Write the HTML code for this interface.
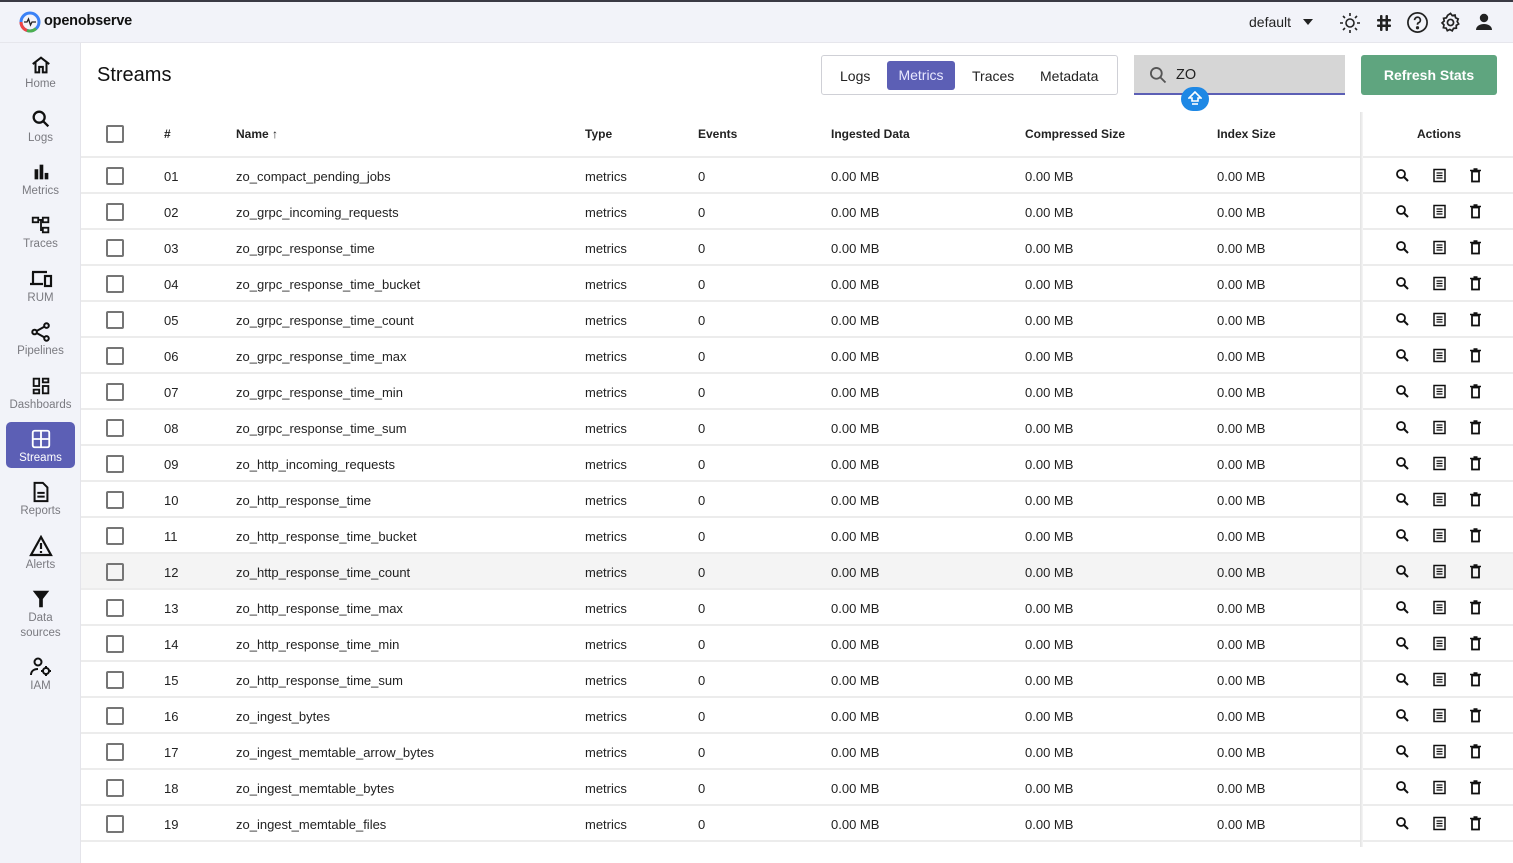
<!DOCTYPE html>
<html><head><meta charset="utf-8"><style>
*{box-sizing:border-box;margin:0;padding:0}
body{width:1513px;height:863px;overflow:hidden;background:#fff;font-family:"Liberation Sans",sans-serif;color:#222;position:relative}
.topline{position:absolute;left:0;top:0;width:1513px;height:2px;background:#3a3a44}
.header{position:absolute;left:0;top:2px;width:1513px;height:41px;background:#f2f3f9;border-bottom:1px solid #e6e6ec}
.side{position:absolute;left:0;top:43px;width:81px;height:820px;background:#f2f3f9;border-right:1px solid #e4e4ea}
.nav{position:absolute;left:6px;width:69px;height:46px;text-align:center;font-size:11.5px;color:#7a7a80;line-height:15px}
.nav svg{display:block;margin:0 auto 1px}
.nav.act{background:#5c5fb5;color:#fff;border-radius:5px}
.a{position:absolute;white-space:nowrap}
.cb{position:absolute;left:106px;width:18px;height:18px;border:2px solid #757575;border-radius:2px}
.row{position:absolute;left:81px;width:1432px;height:36px;border-bottom:2px solid #ececec;font-size:13px}
.row span{position:absolute;top:11px}
.th{font-size:12px;font-weight:bold;color:#222}
</style></head><body>
<div class="topline"></div>
<div class="header">
 <svg class="a" style="left:19px;top:9px" width="22" height="22" viewBox="0 0 22 22"><circle cx="11" cy="11" r="9" fill="none" stroke="#3b82f6" stroke-width="3"/><path d="M2 11a9 9 0 0 0 6 8.5" stroke="#ef4444" stroke-width="3" fill="none"/><path d="M8 19.5a9 9 0 0 0 9-2" stroke="#4caf50" stroke-width="3" fill="none"/><path d="M5 11h3l1.5-3 2 6 1.5-3h4" stroke="#222" stroke-width="1.3" fill="none"/></svg>
 <div class="a" style="left:44px;top:11px;font-size:14.5px;color:#111;font-weight:600;letter-spacing:-0.2px">openobserve</div>
 <div class="a" style="left:1249px;top:12px;font-size:14px">default</div>
 <svg class="a" style="left:1303px;top:17px" width="10" height="6"><path d="M0 0h10L5 6z" fill="#222"/></svg>
 <svg class="a" style="left:1338px;top:9px" width="24" height="24" viewBox="0 0 24 24" fill="none" stroke="#222" stroke-width="1.6"><circle cx="12" cy="12" r="4"/><path d="M12 2v3M12 19v3M2 12h3M19 12h3M5 5l2 2M17 17l2 2M5 19l2-2M17 7l2-2"/></svg>
 <svg class="a" style="left:1373px;top:10px" width="22" height="22" viewBox="0 0 22 22" fill="#222"><rect x="4" y="7" width="14" height="2.5" rx="1"/><rect x="4" y="12.5" width="14" height="2.5" rx="1"/><rect x="7" y="3" width="2.5" height="16" rx="1"/><rect x="12.5" y="3" width="2.5" height="16" rx="1"/></svg>
 <svg class="a" style="left:1406px;top:9px" width="23" height="23" viewBox="0 0 24 24" fill="none" stroke="#222" stroke-width="1.8"><circle cx="12" cy="12" r="10"/><path d="M9 9.5a3 3 0 1 1 4 2.8c-.8.4-1 1-1 2"/><circle cx="12" cy="17.5" r=".8" fill="#222"/></svg>
 <svg class="a" style="left:1439px;top:9px" width="23" height="23" viewBox="0 0 24 24" fill="none" stroke="#222" stroke-width="1.8"><circle cx="12" cy="12" r="3.2"/><path d="M12 2.5l1.8 2.3 2.9-.6.6 2.9 2.7 1.2-1 2.7 1.5 2.5-2.5 1.5.1 2.9-2.9.2-1.4 2.6-2.5-1.4-2.6 1.3-1.2-2.7-2.9-.5.6-2.9-2-2.1 2.2-1.9-.6-2.9 2.9-.5 1.3-2.6z"/></svg>
 <svg class="a" style="left:1474px;top:10px" width="20" height="20" viewBox="0 0 20 20" fill="#222"><circle cx="10" cy="6" r="4.2"/><path d="M2 18c0-4 4-6 8-6s8 2 8 6z"/></svg>
</div>
<div class="side">
 <div class="nav" style="top:11px"><svg width="22" height="22" viewBox="0 0 24 24" fill="none" stroke="#111" stroke-width="2.2"><path d="M3 11L12 4l9 7M6 9v11h4v-6h4v6h4V9"/></svg>Home</div>
 <div class="nav" style="top:65px"><svg width="22" height="22" viewBox="0 0 24 24" fill="none" stroke="#111" stroke-width="2.5"><circle cx="10" cy="10" r="6"/><path d="M14.5 14.5L20 20"/></svg>Logs</div>
 <div class="nav" style="top:118px"><svg width="22" height="22" viewBox="0 0 24 24" fill="#111"><rect x="5" y="9" width="4" height="11"/><rect x="10.5" y="4" width="4" height="16"/><rect x="16" y="13" width="4" height="7"/></svg>Metrics</div>
 <div class="nav" style="top:171px"><svg width="22" height="22" viewBox="0 0 24 24" fill="none" stroke="#111" stroke-width="2"><rect x="3" y="4" width="6" height="5"/><rect x="14" y="4" width="6" height="5"/><rect x="14" y="15" width="6" height="5"/><path d="M9 6.5h5M12 6.5v11h2"/></svg>Traces</div>
 <div class="nav" style="top:225px"><svg width="24" height="22" viewBox="0 0 24 22" fill="none" stroke="#111" stroke-width="2.2"><path d="M3 4h15M4 4v11M1 16h13"/><rect x="16" y="8" width="6" height="10"/></svg>RUM</div>
 <div class="nav" style="top:278px"><svg width="22" height="22" viewBox="0 0 24 24" fill="none" stroke="#111" stroke-width="2.2"><circle cx="5" cy="12" r="2.5"/><circle cx="18" cy="5" r="2.5"/><circle cx="18" cy="19" r="2.5"/><path d="M7 11l9-5M7 13l9 5"/></svg>Pipelines</div>
 <div class="nav" style="top:332px"><svg width="22" height="22" viewBox="0 0 24 24" fill="none" stroke="#111" stroke-width="2"><rect x="4" y="4" width="6" height="8"/><rect x="14" y="4" width="6" height="4"/><rect x="4" y="16" width="6" height="4"/><rect x="14" y="12" width="6" height="8"/></svg>Dashboards</div>
 <div class="nav act" style="top:379px"><svg style="margin-top:6px" width="22" height="22" viewBox="0 0 24 24" fill="none" stroke="#fff" stroke-width="2"><rect x="3" y="3" width="18" height="18" rx="2"/><path d="M12 3v18M3 12h18"/></svg>Streams</div>
 <div class="nav" style="top:438px"><svg width="22" height="22" viewBox="0 0 24 24" fill="none" stroke="#111" stroke-width="2.2"><path d="M5 2h9l5 5v15H5z"/><path d="M8 13h8M8 17h8"/></svg>Reports</div>
 <div class="nav" style="top:492px"><svg width="24" height="22" viewBox="0 0 24 22" fill="none" stroke="#111" stroke-width="2.2"><path d="M12 2L2 20h20z"/><path d="M12 8v6M12 16v2"/></svg>Alerts</div>
 <div class="nav" style="top:545px"><svg width="22" height="22" viewBox="0 0 24 24" fill="#111"><path d="M3 3h18l-7 9v9h-4v-9z"/></svg>Data<br>sources</div>
 <div class="nav" style="top:613px"><svg width="24" height="22" viewBox="0 0 24 22" fill="none" stroke="#111" stroke-width="2"><circle cx="9" cy="6" r="3.5"/><path d="M2 19c0-4 3-6 7-6"/><circle cx="17" cy="15" r="3"/><path d="M17 10v2M17 18v2M12 15h2M20 15h2"/></svg>IAM</div>
</div>

<div class="a" style="left:97px;top:64px;font-size:20px;color:#111">Streams</div>
<div class="a" style="left:821px;top:55px;width:297px;height:40px;border:1px solid #cfd0d6;border-radius:3px"></div>
<div class="a" style="left:840px;top:68px;font-size:14px">Logs</div>
<div class="a" style="left:887px;top:61px;width:68px;height:29px;background:#5c5fb5;border-radius:3px;color:#e8e8ff;font-size:14px;text-align:center;line-height:29px">Metrics</div>
<div class="a" style="left:972px;top:68px;font-size:14px">Traces</div>
<div class="a" style="left:1040px;top:68px;font-size:14px">Metadata</div>
<div class="a" style="left:1134px;top:55px;width:211px;height:40px;background:#d6d6d6;border-bottom:2px solid #5c5fb5"></div>
<svg class="a" style="left:1148px;top:65px" width="20" height="20" viewBox="0 0 24 24" fill="none" stroke="#555" stroke-width="2.2"><circle cx="10" cy="10" r="6.5"/><path d="M15 15l6 6"/></svg>
<div class="a" style="left:1176px;top:67px;font-size:14.5px">ZO</div>
<div class="a" style="left:1181px;top:87px;width:28px;height:24px;border-radius:12px;background:#1e88e5"></div>
<svg class="a" style="left:1188px;top:91px" width="14" height="16" viewBox="0 0 14 16" fill="none" stroke="#fff" stroke-width="1.6"><path d="M7 1L1 7h3v3h6V7h3z"/><path d="M4 13h6"/></svg>
<div class="a" style="left:1361px;top:55px;width:136px;height:40px;background:#5fa57f;border-radius:3px;color:#fff;font-size:14px;font-weight:bold;text-align:center;line-height:40px">Refresh Stats</div>

<div class="row" style="top:110px;height:48px"><div class="cb" style="left:25px;top:15px"></div>
<span class="th" style="left:83px;top:17px">#</span><span class="th" style="left:155px;top:17px">Name ↑</span><span class="th" style="left:504px;top:17px">Type</span><span class="th" style="left:617px;top:17px">Events</span><span class="th" style="left:750px;top:17px">Ingested Data</span><span class="th" style="left:944px;top:17px">Compressed Size</span><span class="th" style="left:1136px;top:17px">Index Size</span><span class="th" style="left:1336px;top:17px">Actions</span></div>

<div class="row" style="top:158px"><div class="cb" style="left:25px;top:9px"></div><span style="left:83px">01</span><span style="left:155px">zo_compact_pending_jobs</span><span style="left:504px">metrics</span><span style="left:617px">0</span><span style="left:750px">0.00 MB</span><span style="left:944px">0.00 MB</span><span style="left:1136px">0.00 MB</span></div>
<div class="row" style="top:194px"><div class="cb" style="left:25px;top:9px"></div><span style="left:83px">02</span><span style="left:155px">zo_grpc_incoming_requests</span><span style="left:504px">metrics</span><span style="left:617px">0</span><span style="left:750px">0.00 MB</span><span style="left:944px">0.00 MB</span><span style="left:1136px">0.00 MB</span></div>
<div class="row" style="top:230px"><div class="cb" style="left:25px;top:9px"></div><span style="left:83px">03</span><span style="left:155px">zo_grpc_response_time</span><span style="left:504px">metrics</span><span style="left:617px">0</span><span style="left:750px">0.00 MB</span><span style="left:944px">0.00 MB</span><span style="left:1136px">0.00 MB</span></div>
<div class="row" style="top:266px"><div class="cb" style="left:25px;top:9px"></div><span style="left:83px">04</span><span style="left:155px">zo_grpc_response_time_bucket</span><span style="left:504px">metrics</span><span style="left:617px">0</span><span style="left:750px">0.00 MB</span><span style="left:944px">0.00 MB</span><span style="left:1136px">0.00 MB</span></div>
<div class="row" style="top:302px"><div class="cb" style="left:25px;top:9px"></div><span style="left:83px">05</span><span style="left:155px">zo_grpc_response_time_count</span><span style="left:504px">metrics</span><span style="left:617px">0</span><span style="left:750px">0.00 MB</span><span style="left:944px">0.00 MB</span><span style="left:1136px">0.00 MB</span></div>
<div class="row" style="top:338px"><div class="cb" style="left:25px;top:9px"></div><span style="left:83px">06</span><span style="left:155px">zo_grpc_response_time_max</span><span style="left:504px">metrics</span><span style="left:617px">0</span><span style="left:750px">0.00 MB</span><span style="left:944px">0.00 MB</span><span style="left:1136px">0.00 MB</span></div>
<div class="row" style="top:374px"><div class="cb" style="left:25px;top:9px"></div><span style="left:83px">07</span><span style="left:155px">zo_grpc_response_time_min</span><span style="left:504px">metrics</span><span style="left:617px">0</span><span style="left:750px">0.00 MB</span><span style="left:944px">0.00 MB</span><span style="left:1136px">0.00 MB</span></div>
<div class="row" style="top:410px"><div class="cb" style="left:25px;top:9px"></div><span style="left:83px">08</span><span style="left:155px">zo_grpc_response_time_sum</span><span style="left:504px">metrics</span><span style="left:617px">0</span><span style="left:750px">0.00 MB</span><span style="left:944px">0.00 MB</span><span style="left:1136px">0.00 MB</span></div>
<div class="row" style="top:446px"><div class="cb" style="left:25px;top:9px"></div><span style="left:83px">09</span><span style="left:155px">zo_http_incoming_requests</span><span style="left:504px">metrics</span><span style="left:617px">0</span><span style="left:750px">0.00 MB</span><span style="left:944px">0.00 MB</span><span style="left:1136px">0.00 MB</span></div>
<div class="row" style="top:482px"><div class="cb" style="left:25px;top:9px"></div><span style="left:83px">10</span><span style="left:155px">zo_http_response_time</span><span style="left:504px">metrics</span><span style="left:617px">0</span><span style="left:750px">0.00 MB</span><span style="left:944px">0.00 MB</span><span style="left:1136px">0.00 MB</span></div>
<div class="row" style="top:518px"><div class="cb" style="left:25px;top:9px"></div><span style="left:83px">11</span><span style="left:155px">zo_http_response_time_bucket</span><span style="left:504px">metrics</span><span style="left:617px">0</span><span style="left:750px">0.00 MB</span><span style="left:944px">0.00 MB</span><span style="left:1136px">0.00 MB</span></div>
<div class="row" style="top:554px;background:#f4f4f4"><div class="cb" style="left:25px;top:9px"></div><span style="left:83px">12</span><span style="left:155px">zo_http_response_time_count</span><span style="left:504px">metrics</span><span style="left:617px">0</span><span style="left:750px">0.00 MB</span><span style="left:944px">0.00 MB</span><span style="left:1136px">0.00 MB</span></div>
<div class="row" style="top:590px"><div class="cb" style="left:25px;top:9px"></div><span style="left:83px">13</span><span style="left:155px">zo_http_response_time_max</span><span style="left:504px">metrics</span><span style="left:617px">0</span><span style="left:750px">0.00 MB</span><span style="left:944px">0.00 MB</span><span style="left:1136px">0.00 MB</span></div>
<div class="row" style="top:626px"><div class="cb" style="left:25px;top:9px"></div><span style="left:83px">14</span><span style="left:155px">zo_http_response_time_min</span><span style="left:504px">metrics</span><span style="left:617px">0</span><span style="left:750px">0.00 MB</span><span style="left:944px">0.00 MB</span><span style="left:1136px">0.00 MB</span></div>
<div class="row" style="top:662px"><div class="cb" style="left:25px;top:9px"></div><span style="left:83px">15</span><span style="left:155px">zo_http_response_time_sum</span><span style="left:504px">metrics</span><span style="left:617px">0</span><span style="left:750px">0.00 MB</span><span style="left:944px">0.00 MB</span><span style="left:1136px">0.00 MB</span></div>
<div class="row" style="top:698px"><div class="cb" style="left:25px;top:9px"></div><span style="left:83px">16</span><span style="left:155px">zo_ingest_bytes</span><span style="left:504px">metrics</span><span style="left:617px">0</span><span style="left:750px">0.00 MB</span><span style="left:944px">0.00 MB</span><span style="left:1136px">0.00 MB</span></div>
<div class="row" style="top:734px"><div class="cb" style="left:25px;top:9px"></div><span style="left:83px">17</span><span style="left:155px">zo_ingest_memtable_arrow_bytes</span><span style="left:504px">metrics</span><span style="left:617px">0</span><span style="left:750px">0.00 MB</span><span style="left:944px">0.00 MB</span><span style="left:1136px">0.00 MB</span></div>
<div class="row" style="top:770px"><div class="cb" style="left:25px;top:9px"></div><span style="left:83px">18</span><span style="left:155px">zo_ingest_memtable_bytes</span><span style="left:504px">metrics</span><span style="left:617px">0</span><span style="left:750px">0.00 MB</span><span style="left:944px">0.00 MB</span><span style="left:1136px">0.00 MB</span></div>
<div class="row" style="top:806px"><div class="cb" style="left:25px;top:9px"></div><span style="left:83px">19</span><span style="left:155px">zo_ingest_memtable_files</span><span style="left:504px">metrics</span><span style="left:617px">0</span><span style="left:750px">0.00 MB</span><span style="left:944px">0.00 MB</span><span style="left:1136px">0.00 MB</span></div>

<div class="a" style="left:1360px;top:112px;width:3px;height:735px;background:linear-gradient(to right,#e2e2e2,#f6f6f6)"></div>

<svg class="a" style="left:1394px;top:168px" width="92" height="664">
<defs>
<g id="acts">
<circle cx="7" cy="6" r="4" fill="none" stroke="#111" stroke-width="1.8"/><path d="M10 9l4 4" stroke="#111" stroke-width="2"/>
<rect x="40" y="1.5" width="11" height="12" fill="none" stroke="#111" stroke-width="1.5"/><path d="M42.5 5h6M42.5 7.5h6M42.5 10h6" stroke="#111" stroke-width="1.2"/>
<rect x="78" y="3.5" width="7" height="10" fill="none" stroke="#111" stroke-width="1.8"/><path d="M76 2.5h11M79.5 1h4" stroke="#111" stroke-width="1.6"/>
</g></defs>
<use href="#acts" y="0"/><use href="#acts" y="36"/><use href="#acts" y="72"/><use href="#acts" y="108"/><use href="#acts" y="144"/><use href="#acts" y="180"/><use href="#acts" y="216"/><use href="#acts" y="252"/><use href="#acts" y="288"/><use href="#acts" y="324"/><use href="#acts" y="360"/><use href="#acts" y="396"/><use href="#acts" y="432"/><use href="#acts" y="468"/><use href="#acts" y="504"/><use href="#acts" y="540"/><use href="#acts" y="576"/><use href="#acts" y="612"/><use href="#acts" y="648"/>
</svg>
</body></html>
